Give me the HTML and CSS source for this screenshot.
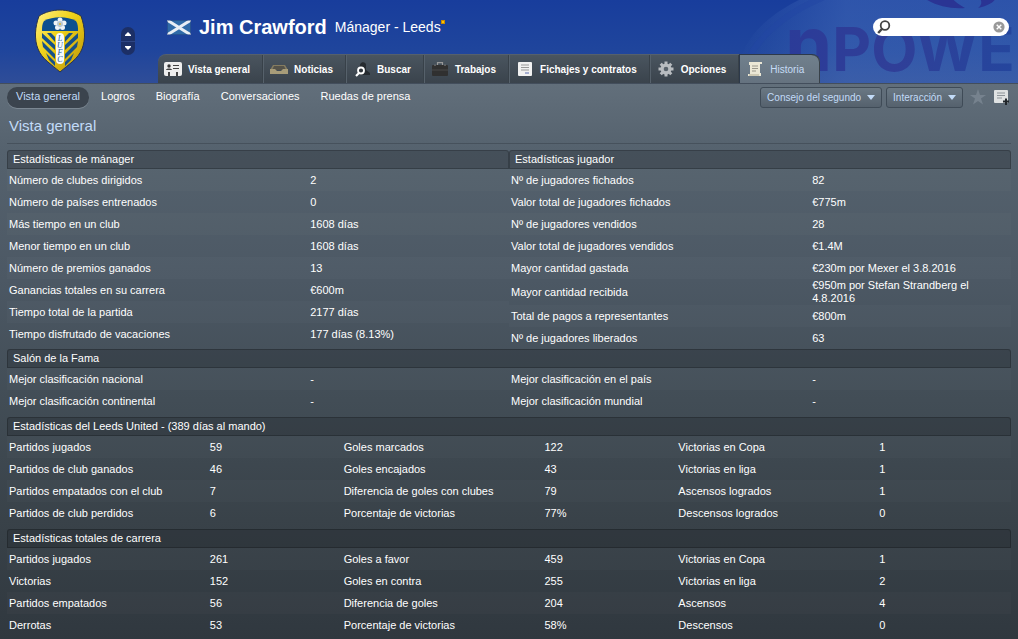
FILE: index.html
```html
<!DOCTYPE html>
<html lang="es">
<head>
    <meta charset="UTF-8">
    <meta name="viewport" content="width=device-width, initial-scale=1.0">
    <title>Jim Crawford - Historia</title>
    <link rel="stylesheet" href="styles.css">
</head>
<body>
    <!-- Cabecera -->
    <header class="header">
        <svg class="sponsor" viewBox="0 0 290 83" aria-hidden="true">
            <defs>
                <linearGradient id="fade" x1="0" y1="0" x2="1" y2="0">
                    <stop offset="0" stop-color="#4a72bd" stop-opacity="0"/>
                    <stop offset="0.3" stop-color="#4a72bd" stop-opacity="0.45"/>
                    <stop offset="1" stop-color="#4a72bd" stop-opacity="0.4"/>
                </linearGradient>
                <linearGradient id="letters" x1="0" y1="0" x2="1" y2="0">
                    <stop offset="0" stop-color="#2b3b98"/>
                    <stop offset="0.4" stop-color="#303f98"/>
                    <stop offset="1" stop-color="#21489f"/>
                </linearGradient>
            </defs>
            <ellipse cx="190" cy="75" rx="180" ry="100" fill="url(#fade)"/>
            <path d="M12 83C18 45 55 10 110 -8" fill="none" stroke="#2146a4" stroke-width="6" opacity="0.5"/>
            <path d="M196 -2C208 6 222 9 237 8C230 4 226 1 224 -2ZM250 8C260 6 266 2 268 -2H252C254 2 254 5 250 8Z" fill="#2a3494"/>
            <text class="sponsor-text" x="57" y="71" fill="url(#letters)"><tspan class="sponsor-n">n</tspan>POWER</text>
        </svg>

        <div class="club">
            <svg class="crest" width="52" height="64" viewBox="0 0 52 64" role="img" aria-label="Leeds United">
                <defs>
                    <linearGradient id="gold" x1="0" y1="0" x2="1" y2="1">
                        <stop offset="0" stop-color="#fff08a"/>
                        <stop offset="0.4" stop-color="#f0d31c"/>
                        <stop offset="1" stop-color="#b99205"/>
                    </linearGradient>
                </defs>
                <path d="M26 1C33 1 41 3 47 7C51 18 52 30 48 40C44 50 35 55 26 63C17 55 8 50 4 40C0 30 1 18 5 7C11 3 19 1 26 1Z" fill="url(#gold)" stroke="#27324d"/>
                <path d="M8 22C8 18 8 15 10 12C19 7 33 7 42 12C44 15 44 18 44 22Z" fill="#0d4f8f"/>
                <path d="M8 24L21 36V41L8 29ZM8 32L21 45V50L9 38ZM13 24H17L21 28V33ZM12 44L21 53V57L15 51ZM44 24L31 36V41L44 29ZM44 32L31 45V50L43 38ZM39 24H35L31 28V33ZM40 44L31 53V57L37 51Z" fill="#15508a"/>
                <rect x="22" y="24" width="8" height="31" rx="4" fill="#f7fafc"/>
                <g fill="#eef3f6">
                    <circle cx="26" cy="11" r="2.500"/><circle cx="30" cy="14" r="2.500"/><circle cx="28.500" cy="18.500" r="2.500"/><circle cx="23.500" cy="18.500" r="2.500"/><circle cx="22" cy="14" r="2.500"/>
                </g>
                <circle cx="26" cy="15" r="3" fill="#b9c9d3"/>
                <circle cx="26" cy="15" r="1" fill="#d9b730"/>
                <g class="crest-text">
                    <text x="26" y="32">L</text>
                    <text x="26" y="39">U</text>
                    <text x="26" y="46">F</text>
                    <text x="26" y="53">C</text>
                </g>
            </svg>
            <div class="stepper">
                <button type="button" aria-label="Anterior"><svg width="6" height="4" viewBox="0 0 6 4"><path d="M0 3L3 0L6 3V4H0Z" fill="#fff"/></svg></button>
                <button type="button" aria-label="Siguiente"><svg width="6" height="4" viewBox="0 0 6 4"><path d="M0 1L3 4L6 1V0H0Z" fill="#fff"/></svg></button>
            </div>
        </div>

        <div class="header-main">
            <div class="title-row">
                <svg class="flag" width="24" height="15" viewBox="0 0 24 15" role="img" aria-label="Escocia">
                    <rect width="24" height="15" fill="#2f6aa8"/>
                    <path d="M0 0L24 15M24 0L0 15" stroke="#e8eef5" stroke-width="3"/>
                    <rect x="0.500" y="0.500" width="23" height="14" fill="none" stroke="#1d3a78" opacity="0.5"/>
                </svg>
                <h1>Jim Crawford</h1>
                <span class="role">Mánager - Leeds</span>
                <span class="mark"></span>
                <div class="search">
                    <svg width="14" height="14" viewBox="0 0 14 14" aria-hidden="true"><circle cx="8" cy="5.500" r="4.300" fill="none" stroke="#444" stroke-width="1.800"/><path d="M5.300 8.500L1.200 13" stroke="#444" stroke-width="2.400"/></svg>
                    <input type="text" aria-label="Buscar">
                    <button type="button" aria-label="Borrar"><svg width="12" height="12" viewBox="0 0 12 12"><circle cx="6" cy="6" r="5.600" fill="#999"/><path d="M3.700 3.700L8.300 8.300M8.300 3.700L3.700 8.300" stroke="#fff" stroke-width="1.400"/></svg></button>
                </div>
            </div>

            <!-- Pestañas -->
            <nav class="tabs">
                <a href="#">
                    <svg width="20" height="16" viewBox="0 0 20 16"><rect x="1" y="1" width="18" height="14" rx="2" fill="#eee"/><circle cx="6" cy="5" r="1.700" fill="#333"/><path d="M3 9C3 7 9 7 9 9ZM10 4H16V5H10ZM10 7H16V8H10ZM5 11H7V15H5ZM13 11H15V15H13Z" fill="#444"/></svg>
                    Vista general
                </a>
                <a href="#">
                    <svg width="20" height="16" viewBox="0 0 20 16"><path d="M4 4H16L19 9H1Z" fill="#857c60"/><path d="M5 5H15L17 9H3Z" fill="#55534a"/><path d="M1 8H6L8 10H12L14 8H19V13H1Z" fill="#a79c79"/></svg>
                    Noticias
                </a>
                <a href="#">
                    <svg width="20" height="16" viewBox="0 0 20 16"><path d="M8 6C7 0 14 0 14 4V9L18 12V14H5V9Z" fill="#262b30"/><circle cx="9" cy="9.500" r="3" fill="#30363c" stroke="#fff" stroke-width="1.800"/><path d="M7 12L4 15" stroke="#fff" stroke-width="2.200"/></svg>
                    Buscar
                </a>
                <a href="#">
                    <svg width="20" height="16" viewBox="0 0 20 16"><path d="M7.500 4V1.700H12.500V4" fill="none" stroke="#999" stroke-width="1.200"/><rect x="2" y="4" width="16" height="11" rx="1" fill="#303030"/><path d="M2 9H18" stroke="#484848"/><path d="M5 3.500V5M15 3.500V5" stroke="#888"/></svg>
                    Trabajos
                </a>
                <a href="#">
                    <svg width="20" height="16" viewBox="0 0 20 16"><rect x="3" y="1" width="14" height="14" rx="1" fill="#f1f1f1"/><path d="M6 4H14M6 6.500H14M6 9H14" stroke="#999"/><path d="M10 12H14" stroke="#5a6cb0"/></svg>
                    Fichajes y contratos
                </a>
                <a href="#">
                    <svg width="20" height="16" viewBox="0 0 20 16"><g stroke="#b8bcc0" stroke-width="3"><path d="M10 0.500V15.500M2.500 8H17.500M4.700 2.700L15.300 13.300M15.300 2.700L4.700 13.300"/></g><circle cx="10" cy="8" r="5.500" fill="#b8bcc0"/><circle cx="10" cy="8" r="2.300" fill="#59636c"/></svg>
                    Opciones
                </a>
                <a href="#" class="active">
                    <svg width="20" height="16" viewBox="0 0 20 16"><path d="M4 1H17V3H15V12H16V15H3V13H5V4H4Z" fill="#ebe7d5"/><path d="M4 13H14V15H4Z" fill="#cfcab4"/><path d="M7 5H13M7 7.500H13M7 10H11" stroke="#99968a"/></svg>
                    Historia
                </a>
            </nav>
        </div>
    </header>

    <!-- Submenú -->
    <div class="subbar">
        <nav class="subnav">
            <a href="#" class="active">Vista general</a>
            <a href="#">Logros</a>
            <a href="#">Biografía</a>
            <a href="#">Conversaciones</a>
            <a href="#">Ruedas de prensa</a>
        </nav>
        <div class="actions">
            <button type="button" class="menu-button">Consejo del segundo <span class="arrow"></span></button>
            <button type="button" class="menu-button">Interacción <span class="arrow"></span></button>
            <button type="button" class="icon-button" aria-label="Favorito"><svg width="16" height="16" viewBox="0 0 16 16"><path d="M8 0L10 6H16L11 9.500L13 15.500L8 12L3 15.500L5 9.500L0 6H6Z" fill="#76828e"/></svg></button>
            <button type="button" class="icon-button" aria-label="Añadir nota"><svg width="16" height="16" viewBox="0 0 16 16"><rect x="1" y="1" width="14" height="13" rx="1" fill="#dfe2e3"/><path d="M4 4H12M4 6.500H12M4 9H9" stroke="#8d9499"/><path d="M13 9.500V16M10 12.500H16" stroke="#20262b" stroke-width="2"/></svg></button>
        </div>
    </div>

    <main>
        <h2>Vista general</h2>

        <!-- Mánager y jugador -->
        <section class="columns">
            <div class="column">
                <h3>Estadísticas de mánager</h3>
                <table>
                    <tr><th scope="row">Número de clubes dirigidos</th><td>2</td></tr>
                    <tr><th scope="row">Número de países entrenados</th><td>0</td></tr>
                    <tr><th scope="row">Más tiempo en un club</th><td>1608 días</td></tr>
                    <tr><th scope="row">Menor tiempo en un club</th><td>1608 días</td></tr>
                    <tr><th scope="row">Número de premios ganados</th><td>13</td></tr>
                    <tr><th scope="row">Ganancias totales en su carrera</th><td>€600m</td></tr>
                    <tr><th scope="row">Tiempo total de la partida</th><td>2177 días</td></tr>
                    <tr><th scope="row">Tiempo disfrutado de vacaciones</th><td>177 días (8.13%)</td></tr>
                </table>
            </div>
            <div class="column">
                <h3>Estadísticas jugador</h3>
                <table>
                    <tr><th scope="row">Nº de jugadores fichados</th><td>82</td></tr>
                    <tr><th scope="row">Valor total de jugadores fichados</th><td>€775m</td></tr>
                    <tr><th scope="row">Nº de jugadores vendidos</th><td>28</td></tr>
                    <tr><th scope="row">Valor total de jugadores vendidos</th><td>€1.4M</td></tr>
                    <tr><th scope="row">Mayor cantidad gastada</th><td>€230m por Mexer el 3.8.2016</td></tr>
                    <tr><th scope="row">Mayor cantidad recibida</th><td>€950m por Stefan Strandberg el 4.8.2016</td></tr>
                    <tr><th scope="row">Total de pagos a representantes</th><td>€800m</td></tr>
                    <tr><th scope="row">Nº de jugadores liberados</th><td>63</td></tr>
                </table>
            </div>
        </section>

        <!-- Salón de la Fama -->
        <section class="group">
            <h3>Salón de la Fama</h3>
            <div class="columns">
                <table>
                    <tr><th scope="row">Mejor clasificación nacional</th><td>-</td></tr>
                    <tr><th scope="row">Mejor clasificación continental</th><td>-</td></tr>
                </table>
                <table>
                    <tr><th scope="row">Mejor clasificación en el país</th><td>-</td></tr>
                    <tr><th scope="row">Mejor clasificación mundial</th><td>-</td></tr>
                </table>
            </div>
        </section>

        <!-- Club actual -->
        <section class="group">
            <h3>Estadísticas del Leeds United - (389 días al mando)</h3>
            <div class="columns">
                <table>
                    <tr><th scope="row">Partidos jugados</th><td>59</td></tr>
                    <tr><th scope="row">Partidos de club ganados</th><td>46</td></tr>
                    <tr><th scope="row">Partidos empatados con el club</th><td>7</td></tr>
                    <tr><th scope="row">Partidos de club perdidos</th><td>6</td></tr>
                </table>
                <table>
                    <tr><th scope="row">Goles marcados</th><td>122</td></tr>
                    <tr><th scope="row">Goles encajados</th><td>43</td></tr>
                    <tr><th scope="row">Diferencia de goles con clubes</th><td>79</td></tr>
                    <tr><th scope="row">Porcentaje de victorias</th><td>77%</td></tr>
                </table>
                <table>
                    <tr><th scope="row">Victorias en Copa</th><td>1</td></tr>
                    <tr><th scope="row">Victorias en liga</th><td>1</td></tr>
                    <tr><th scope="row">Ascensos logrados</th><td>1</td></tr>
                    <tr><th scope="row">Descensos logrados</th><td>0</td></tr>
                </table>
            </div>
        </section>

        <!-- Totales -->
        <section class="group">
            <h3>Estadísticas totales de carrera</h3>
            <div class="columns">
                <table>
                    <tr><th scope="row">Partidos jugados</th><td>261</td></tr>
                    <tr><th scope="row">Victorias</th><td>152</td></tr>
                    <tr><th scope="row">Partidos empatados</th><td>56</td></tr>
                    <tr><th scope="row">Derrotas</th><td>53</td></tr>
                </table>
                <table>
                    <tr><th scope="row">Goles a favor</th><td>459</td></tr>
                    <tr><th scope="row">Goles en contra</th><td>255</td></tr>
                    <tr><th scope="row">Diferencia de goles</th><td>204</td></tr>
                    <tr><th scope="row">Porcentaje de victorias</th><td>58%</td></tr>
                </table>
                <table>
                    <tr><th scope="row">Victorias en Copa</th><td>1</td></tr>
                    <tr><th scope="row">Victorias en liga</th><td>2</td></tr>
                    <tr><th scope="row">Ascensos</th><td>4</td></tr>
                    <tr><th scope="row">Descensos</th><td>0</td></tr>
                </table>
            </div>
        </section>
    </main>
</body>
</html>
```
FILE: styles.css
```css
* {
    box-sizing: border-box;
}

body {
    margin: 0;
    min-height: 100vh;
    font-family: "Liberation Sans", Arial, sans-serif;
    font-size: 11px;
    line-height: 13px;
    color: #fff;
    background: linear-gradient(#65727f 0, #626f7b 84px, #55626e 150px, #4c5864 280px, #424d56 400px, #394249 520px, #30383f 100%);
}

a {
    color: inherit;
    text-decoration: none;
}

button {
    font: inherit;
    color: inherit;
    border: 0;
    padding: 0;
    background: none;
    cursor: pointer;
}

svg {
    display: block;
    flex: none;
}

/* Cabecera */
.header {
    position: relative;
    display: flex;
    background: linear-gradient(#183d9c, #1f459c 60%, #2f4d98);
    border-bottom: 1px solid #434e5c;
    overflow: hidden;
}

.sponsor {
    position: absolute;
    top: 0;
    right: 0;
    width: 290px;
    height: 83px;
}

.sponsor-text {
    font-family: Inter, sans-serif;
    font-size: 60px;
    font-weight: bold;
}

.sponsor-n {
    font-size: 76px;
}

.club {
    display: flex;
    align-items: center;
    justify-content: space-between;
    width: 158px;
    padding: 0 23px 2px 34px;
}

.crest-text {
    font-family: "Liberation Serif", serif;
    font-size: 8px;
    font-style: italic;
    text-anchor: middle;
    fill: #1a5a9a;
}

.stepper {
    display: flex;
    flex-direction: column;
    width: 14px;
    border-radius: 7px;
    background: #1c2f66;
}

.stepper button {
    display: flex;
    align-items: center;
    justify-content: center;
    height: 14px;
}

.stepper button + button {
    border-top: 1px solid #2f4684;
}

.header-main {
    position: relative;
    flex: 1;
}

.title-row {
    display: flex;
    align-items: center;
    height: 54px;
    padding: 0 9px;
}

h1 {
    margin: 0 8px;
    font-size: 20px;
    line-height: 24px;
}

.role {
    font-size: 14px;
    line-height: 16px;
}

.mark {
    width: 4px;
    height: 4px;
    margin-bottom: 10px;
    background: #ffc400;
    border: 1px solid #c98a00;
}

.search {
    display: flex;
    align-items: center;
    gap: 2px;
    width: 136px;
    height: 18px;
    margin-left: auto;
    padding: 0 4px;
    border-radius: 9px;
    background: #fff;
}

.search input {
    flex: 1;
    min-width: 0;
    border: 0;
    padding: 0;
    font: inherit;
    color: #333;
    background: none;
    outline: none;
}

/* Pestañas */
.tabs {
    display: flex;
}

.tabs a {
    display: flex;
    align-items: center;
    gap: 5px;
    height: 29px;
    padding: 0 13px 0 5px;
    font-size: 10px;
    font-weight: bold;
    border-left: 1px solid #56616b;
    border-top: 1px solid #55606c;
    background: linear-gradient(#4a555f, #3a434c);
    box-shadow: inset -1px 0 #384149;
}

.tabs a:first-child {
    border-left: 0;
    border-top-left-radius: 8px;
}

.tabs .active {
    padding-right: 16px;
    font-weight: normal;
    color: #c6dcf5;
    border-color: #2d394a;
    border-top-right-radius: 8px;
    background: linear-gradient(#71808d, #65727f);
}

/* Submenú */
.subbar {
    display: flex;
    align-items: center;
    justify-content: space-between;
    height: 26px;
    padding: 0 9px 0 7px;
}

.subnav {
    display: flex;
    gap: 3px;
}

.subnav a {
    padding: 3px 9px 5px;
    border-radius: 10px;
}

.subnav .active {
    color: #c2dbf8;
    background: #3b444e;
    box-shadow: 0 1px #7b8792;
}

.actions {
    display: flex;
    align-items: center;
    gap: 4px;
}

.menu-button {
    display: flex;
    align-items: center;
    gap: 6px;
    height: 21px;
    padding: 0 6px;
    font-size: 10px;
    color: #c2dbf8;
    border: 1px solid #3f4b57;
    border-radius: 3px;
    background: linear-gradient(#6a7884, #55616d);
}

.arrow {
    border: 4px solid transparent;
    border-top: 5px solid #c2dbf8;
    border-bottom: 0;
}

.icon-button {
    margin-left: 3px;
}

/* Contenido */
main {
    padding: 0 7px;
}

h2 {
    margin: 0 0 6px;
    padding: 7px 2px 9px;
    font-size: 15px;
    line-height: 17px;
    font-weight: normal;
    color: #c2dbf8;
    border-bottom: 1px solid #46515c;
}

h3 {
    margin: 0;
    padding: 2px 5px 3px;
    font-size: 11px;
    line-height: 12px;
    font-weight: normal;
    border: 1px solid rgba(0, 0, 0, 0.2);
    border-radius: 3px 3px 0 0;
    background: rgba(25, 28, 30, 0.25);
}

.columns {
    display: flex;
    align-items: flex-start;
}

.columns > * {
    flex: 1;
    min-width: 0;
}

.group {
    margin-bottom: 5px;
}

.group:last-child {
    margin-bottom: 0;
}

table {
    width: 100%;
    table-layout: fixed;
    border-collapse: collapse;
}

tr {
    height: 22px;
}

tr:nth-child(odd) {
    background: rgba(255, 255, 255, 0.02);
}

th, td {
    padding: 0 2px;
    font-weight: normal;
    text-align: left;
    vertical-align: middle;
}

th {
    width: 60%;
}
```
